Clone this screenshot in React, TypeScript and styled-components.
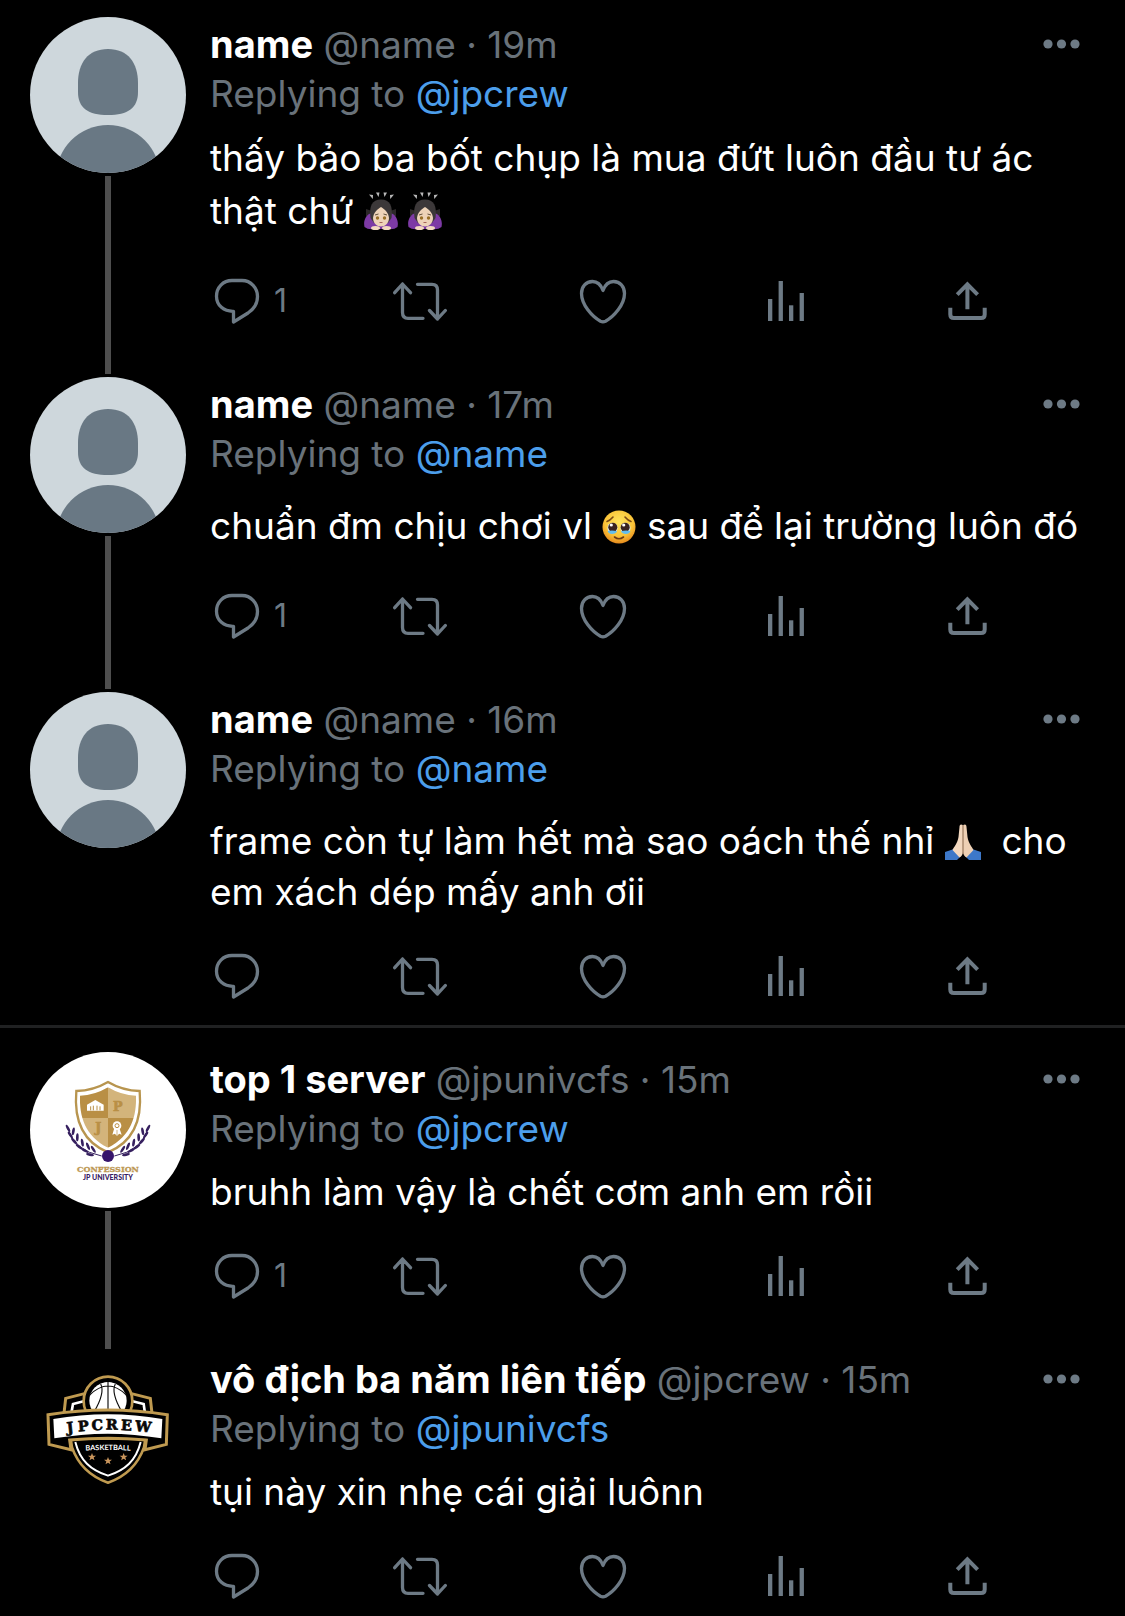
import React from "react";
import styled, { createGlobalStyle } from "styled-components";

const colors = {
  bg: "#000000",
  text: "#ffffff",
  muted: "#69727a",
  icon: "#6d7a85",
  link: "#4c9eeb",
  thread: "#4e4e4e",
  divider: "#202122",
};

const GlobalStyle = createGlobalStyle`
  *, *::before, *::after { box-sizing: border-box; }
  body {
    margin: 0;
    background: ${colors.bg};
    color: ${colors.text};
    font-family: Inter, Roboto, "Noto Sans", sans-serif;
  }
`;

const Timeline = styled.main`
  padding-top: 14px;
  overflow: hidden;
`;

const Thread = styled.section`
  & + & {
    border-top: 3px solid ${colors.divider};
    padding-top: 21px;
  }
`;

const TweetRow = styled.article`
  display: flex;
  padding-left: 30px;
`;

const AvatarColumn = styled.div`
  display: flex;
  flex-direction: column;
  align-items: center;
  flex: none;
  gap: 3px;
  padding-top: 3px;
  margin-right: 24px;
`;

const AvatarFrame = styled.div`
  width: 156px;
  height: 156px;
  border-radius: 50%;
  overflow: hidden;

  svg {
    display: block;
    width: 100%;
    height: 100%;
  }
`;

const ThreadLine = styled.div`
  flex: 1;
  width: 6px;
  background: ${colors.thread};
`;

const Content = styled.div<{ $last: boolean }>`
  flex: 1;
  min-width: 0;
  padding-top: 7px;
  padding-bottom: ${(p) => (p.$last ? 22 : 46)}px;
`;

const Header = styled.header`
  display: flex;
  align-items: center;
  justify-content: space-between;
  padding-right: 40px;
`;

const Byline = styled.div`
  font-size: 37px;
  line-height: 48px;
  color: ${colors.muted};
  white-space: nowrap;
`;

const DisplayName = styled.strong`
  font-size: 38px;
  line-height: 1;
  font-weight: 700;
  color: ${colors.text};
`;

const Replying = styled.p`
  margin: 0;
  font-size: 37px;
  line-height: 50px;
  color: ${colors.muted};
`;

const Mention = styled.a`
  color: ${colors.link};
  text-decoration: none;
`;

const Body = styled.p<{ $lead: number; $tail: number; $line: number }>`
  margin: ${(p) => p.$lead}px 40px ${(p) => p.$tail}px 0;
  font-size: 37px;
  line-height: ${(p) => p.$line}px;
`;

const IconButton = styled.button`
  display: flex;
  align-items: center;
  justify-self: start;
  gap: 10px;
  padding: 0;
  border: 0;
  background: none;
  color: ${colors.icon};
  font-family: inherit;
  font-size: 32px;
  line-height: 54px;
  cursor: pointer;
`;

const Actions = styled.div`
  display: grid;
  grid-template-columns: repeat(5, 1fr);
  height: 54px;
`;

const ActionSvg = styled.svg`
  display: block;
  width: 54px;
  height: 54px;
  fill: none;
  stroke: currentColor;
  stroke-width: 3.3;
  stroke-linecap: round;
  stroke-linejoin: round;
`;

const MoreSvg = styled.svg`
  display: block;
  width: 48px;
  height: 48px;
  fill: currentColor;
`;

const EmojiSvg = styled.svg<{ $wide?: boolean }>`
  width: ${(p) => (p.$wide ? 36 : 34)}px;
  height: 39px;
  vertical-align: -7px;
`;

function ReplyIcon() {
  return (
    <ActionSvg viewBox="0 0 54 54" aria-hidden="true">
      <path d="M22 6.5H32C41 6.5 47.5 14 47.5 22.5C47.5 30 43.5 35.3 38 39L23.5 48V37.3C14 37.6 6.5 31.5 6.5 22.2C6.5 13.5 13 6.5 22 6.5Z" />
    </ActionSvg>
  );
}

function RetweetIcon() {
  return (
    <ActionSvg viewBox="0 0 54 54" aria-hidden="true">
      <path d="M1.7 18.7L9.5 10L17.5 18.7M9.5 10V38.5C9.5 42 11.5 44.3 15 44.3H30" />
      <path d="M24.5 10.3H39C42.5 10.3 44.5 12.5 44.5 16V45M36.5 36.5L44.5 45L52.3 36.5" />
    </ActionSvg>
  );
}

function HeartIcon() {
  return (
    <ActionSvg viewBox="0 0 54 54" aria-hidden="true">
      <path d="M27 16.5C25 11 21.5 7.5 16.5 7.5C10 7.5 5.5 12.5 5.5 19.5C5.5 31 16.5 43 24.5 47.2Q27 48.4 29.5 47.2C37.5 43 48.5 31 48.5 19.5C48.5 12.5 44 7.5 37.5 7.5C32.5 7.5 29 11 27 16.5Z" />
    </ActionSvg>
  );
}

function StatsIcon() {
  return (
    <ActionSvg viewBox="0 0 54 54" aria-hidden="true">
      <g fill="currentColor" stroke="none">
        <rect x="9" y="25" width="4.3" height="22" />
        <rect x="19.6" y="7" width="4.3" height="40" />
        <rect x="30" y="31.3" width="4.3" height="15.7" />
        <rect x="40.6" y="19" width="4.3" height="28" />
      </g>
    </ActionSvg>
  );
}

function ShareIcon() {
  return (
    <ActionSvg viewBox="0 0 54 54" aria-hidden="true">
      <g strokeWidth="4" strokeLinecap="butt" strokeLinejoin="miter">
        <path d="M15.2 20.6L25.4 10.4L35.6 20.6M25.4 11V35.3" />
        <path d="M8.3 33.7V40.5C8.3 42.8 9.7 44.1 12 44.1H39C41.3 44.1 42.7 42.8 42.7 40.5V33.7" />
      </g>
    </ActionSvg>
  );
}

function BowingEmoji() {
  return (
    <EmojiSvg viewBox="1 0 34 39" role="img" aria-label="person bowing">
      <g fill="#b9b9b9">
        <path d="M6 2.5L10 3L9.8 7Z" />
        <path d="M13 0.5H16.5L15.5 5Z" />
        <path d="M20.5 0.5H24L21.5 5Z" />
        <path d="M27 3L31 2.5L27.2 7Z" />
      </g>
      <path d="M3 17L9 19V25L3 24ZM33 17L27 19V25L33 24Z" fill="#2c2829" />
      <path d="M1.5 35C0 29 3 22 9 21H27C33 22 36 29 34.5 35Q31 38 24 37H12Q5 38 1.5 35Z" fill="#7d3aa5" />
      <path d="M7.5 26C6 14 9 7.5 18 7.5S30 14 28.5 26L25 31H11Z" fill="#3c3839" />
      <path d="M18 15C15 17 10.5 20 10 26C10 31 14 34.5 18 34.5S26 31 26 26C25.5 20 21 17 18 15Z" fill="#eed3b8" />
      <path d="M12 23L15.5 22M24 23L20.5 22" stroke="#63513d" />
      <circle cx="14.5" cy="26" r="1.7" fill="#9a7027" />
      <circle cx="21.5" cy="26" r="1.7" fill="#9a7027" />
      <path d="M16.5 30.5H19.5" stroke="#a5655b" />
      <ellipse cx="12.5" cy="36" rx="4.5" ry="2" fill="#f3d9c1" />
      <ellipse cx="23.5" cy="36" rx="4.5" ry="2" fill="#f3d9c1" />
    </EmojiSvg>
  );
}

function TearyEmoji() {
  return (
    <EmojiSvg viewBox="1 0 34 39" role="img" aria-label="face holding back tears">
      <defs>
        <radialGradient id="face" cx="50%" cy="35%" r="65%">
          <stop offset="0" stopColor="#ffe45c" />
          <stop offset="0.65" stopColor="#fbc438" />
          <stop offset="1" stopColor="#e58a1d" />
        </radialGradient>
      </defs>
      <circle cx="18" cy="20" r="16.5" fill="url(#face)" />
      <path d="M6 14.5Q9 13.5 12 10M30 14.5Q27 13.5 24 10" fill="none" stroke="#7b4914" strokeWidth="1.6" strokeLinecap="round" />
      <ellipse cx="11.5" cy="21" rx="5" ry="5.3" fill="#d9eef8" />
      <ellipse cx="24.5" cy="21" rx="5" ry="5.3" fill="#d9eef8" />
      <circle cx="11.8" cy="20.3" r="4.5" fill="#3a2320" />
      <circle cx="24.2" cy="20.3" r="4.5" fill="#3a2320" />
      <circle cx="10.3" cy="18" r="1.6" fill="#fff" />
      <circle cx="22.7" cy="18" r="1.6" fill="#fff" />
      <path d="M6.5 24Q11.5 22.8 16 24.3Q15 27 11 27Q7.5 26.8 6.5 24ZM29.5 24Q24.5 22.8 20 24.3Q21 27 25 27Q28.5 26.8 29.5 24Z" fill="#64bdee" />
      <path d="M13.5 30Q18 33.5 22.5 30" fill="none" stroke="#6f3a12" strokeWidth="1.6" strokeLinecap="round" />
    </EmojiSvg>
  );
}

function PrayEmoji() {
  return (
    <EmojiSvg $wide viewBox="0 0 36 39" role="img" aria-label="folded hands">
      <path d="M0 30L9 27L16 34L12 38H0ZM36 30L27 27L20 34L24 38H36Z" fill="#3d78c9" />
      <path d="M17.8 3C15.5 1.5 14.5 3 14.5 5L13.5 15C12.5 21 9 25 7.5 28L14.5 35.5Q17.8 33.5 17.8 30Z" fill="#f3d8bf" />
      <path d="M18.2 3C20.5 1.5 21.5 3 21.5 5L22.5 15C23.5 21 27 25 28.5 28L21.5 35.5Q18.2 33.5 18.2 30Z" fill="#eed0b4" />
      <path d="M18 3V32" stroke="#b8906f" strokeWidth="1" />
    </EmojiSvg>
  );
}

function DefaultAvatar() {
  return (
    <svg viewBox="0 0 156 156" role="img" aria-label="Default avatar">
      <rect width="156" height="156" fill="#ced7dc" />
      <path d="M78 32C98 32 108 46 108 66V75C108 91 98 98 78 98S48 91 48 75V66C48 46 58 32 78 32Z" fill="#697884" />
      <circle cx="78" cy="160" r="52" fill="#697884" />
    </svg>
  );
}

const leaves = [
  [144, 265, 62],
  [151, 285, 55],
  [162, 303, 48],
  [177, 320, 38],
  [195, 332, 28],
  [160, 274, 100],
  [172, 292, 92],
  [187, 308, 80],
  [204, 319, 68],
  [220, 328, 58],
  [210, 344, 12],
];

function Laurel() {
  return (
    <g>
      <path d="M142 262Q162 332 245 348" fill="none" stroke="#36205f" strokeWidth="3" />
      {leaves.map(([x, y, angle]) => (
        <ellipse key={`${x}-${y}`} cx={x} cy={y} rx="12" ry="4" fill="#36205f" transform={`rotate(${angle} ${x} ${y})`} />
      ))}
    </g>
  );
}

function UniversityAvatar() {
  return (
    <svg viewBox="30 36 468 468" role="img" aria-label="Confession JP University crest">
      <defs>
        <clipPath id="crest">
          <path d="M264 142Q304 166 348 167C350 228 334 288 264 323C194 288 178 228 180 167Q224 166 264 142Z" />
        </clipPath>
      </defs>
      <rect x="30" y="36" width="468" height="468" fill="#fff" />
      <Laurel />
      <g transform="translate(528 0) scale(-1 1)">
        <Laurel />
      </g>
      <path
        d="M264 126Q308 152 359 153C366 232 344 304 264 337C184 304 162 232 169 153Q220 152 264 126Z"
        fill="#fff"
        stroke="#b8954f"
        strokeWidth="7"
      />
      <g clipPath="url(#crest)">
        <rect x="170" y="130" width="94" height="104" fill="#b98f45" />
        <rect x="264" y="130" width="94" height="104" fill="#d3b47b" />
        <rect x="170" y="234" width="94" height="104" fill="#d3b47b" />
        <rect x="264" y="234" width="94" height="104" fill="#b98f45" />
      </g>
      <path d="M201 194L226 180L251 194V212H201Z" fill="#fff" />
      <path d="M212 199V211M220 197V211M231 197V211M240 199V211" stroke="#b98f45" strokeWidth="3" />
      <g fontFamily="'DejaVu Serif', serif" fontWeight="700" textAnchor="middle" fill="#b98f45" stroke="#b98f45" strokeWidth="2">
        <text x="293" y="212" fontSize="38">P</text>
        <text x="235" y="277" fontSize="38">J</text>
      </g>
      <path d="M283 264L277 284L285 281L290 288V268ZM298 264L305 284L297 281L292 288V268Z" fill="#fff" />
      <circle cx="291" cy="257" r="13" fill="#fff" />
      <circle cx="291" cy="257" r="6" fill="none" stroke="#b98f45" strokeWidth="3" />
      <circle cx="264" cy="348" r="18" fill="#36146b" />
      <text
        x="264"
        y="396"
        fontSize="24"
        textAnchor="middle"
        fontFamily="'DejaVu Serif', serif"
        fontWeight="700"
        fill="#bd9855"
        stroke="#bd9855"
        strokeWidth="1"
      >
        CONFESSION
      </text>
      <text x="264" y="420" fontSize="21" textAnchor="middle" fontFamily="Lato, sans-serif" fontWeight="900" fill="#36205f">
        JP UNIVERSITY
      </text>
    </svg>
  );
}

const star = "M0 -12L3.2 -4L12 -3.7L5 1.7L7.5 10L0 5.2L-7.5 10L-5 1.7L-12 -3.7L-3.2 -4Z";

const wordmark = [
  { letter: "J", x: 122, y: 217, turn: -6 },
  { letter: "P", x: 161, y: 213, turn: -4 },
  { letter: "C", x: 202, y: 210, turn: -2 },
  { letter: "R", x: 245, y: 209, turn: 1 },
  { letter: "E", x: 289, y: 211, turn: 3 },
  { letter: "W", x: 338, y: 215, turn: 6 },
];

function CrewAvatar() {
  return (
    <svg viewBox="0 -24 468 468" role="img" aria-label="JPCREW Basketball badge">
      <defs>
        <clipPath id="ball">
          <circle cx="234" cy="128" r="63" />
        </clipPath>
        <path id="sport-curve" d="M144 273Q234 267 324 273" />
      </defs>
      <rect x="0" y="-24" width="468" height="468" fill="#000" />
      <g fill="#000" strokeLinejoin="miter">
        <path d="M102 160L107 115L175 98H293L361 115L366 160" stroke="#bf9a50" strokeWidth="9" />
        <path d="M124 160L129 132L175 120H293L341 132L345 160" stroke="#fff" strokeWidth="8" />
        <circle cx="234" cy="123" r="73" stroke="#bf9a50" strokeWidth="8" />
      </g>
      <g clipPath="url(#ball)">
        <circle cx="234" cy="122" r="56" fill="#fff" />
        <g fill="none" stroke="#111" strokeWidth="3.5">
          <path d="M234 66V155M178 106Q234 50 290 106M212 72Q226 98 192 156M256 72Q242 98 276 156" />
        </g>
      </g>
      <path d="M122 236L126 262C145 316 180 349 234 368C288 349 323 316 342 262L346 236Z" fill="#000" stroke="#bf9a50" strokeWidth="8" />
      <path d="M136 246C150 302 182 330 234 347C286 330 318 302 332 246" fill="none" stroke="#fff" strokeWidth="6" />
      <path
        d="M54 164Q234 136 412 164L409 253L345 269L349 240Q234 230 119 240L123 269L57 253Z"
        fill="#000"
        stroke="#bf9a50"
        strokeWidth="9"
      />
      <path d="M70 177Q234 148 397 177L394 235Q234 207 73 235Z" fill="#fff" />
      <g fontSize="43" textAnchor="middle" fontFamily="'DejaVu Serif', serif" fontWeight="700" fill="#080808" stroke="#080808" strokeWidth="2">
        {wordmark.map(({ letter, x, y, turn }) => (
          <text key={letter} x={x} y={y} transform={`rotate(${turn} ${x} ${y})`}>
            {letter}
          </text>
        ))}
      </g>
      <text fontSize="22" textAnchor="middle" fontFamily="Lato, sans-serif" fontWeight="700" fill="#fff">
        <textPath href="#sport-curve" startOffset="50%">BASKETBALL</textPath>
      </text>
      <g fill="#c9955c">
        <path d={star} transform="translate(186 291)" />
        <path d={star} transform="translate(234 303)" />
        <path d={star} transform="translate(281 291)" />
      </g>
    </svg>
  );
}

type TweetProps = {
  avatar: React.ReactNode;
  name: string;
  handle: string;
  age: string;
  replyTo: string;
  replies?: number;
  last?: boolean;
  lead?: number;
  tail?: number;
  line?: number;
  children: React.ReactNode;
};

function Tweet({
  avatar,
  name,
  handle,
  age,
  replyTo,
  replies,
  last = false,
  lead = 12,
  tail = 32,
  line = 51,
  children,
}: TweetProps) {
  return (
    <TweetRow>
      <AvatarColumn>
        <AvatarFrame>{avatar}</AvatarFrame>
        {!last && <ThreadLine />}
      </AvatarColumn>
      <Content $last={last}>
        <Header>
          <Byline>
            <DisplayName>{name}</DisplayName> {handle} · <time>{age}</time>
          </Byline>
          <IconButton type="button" aria-label="More">
            <MoreSvg viewBox="0 0 48 48" aria-hidden="true">
              <circle cx="11" cy="23" r="4.6" />
              <circle cx="24.5" cy="23" r="4.6" />
              <circle cx="38" cy="23" r="4.6" />
            </MoreSvg>
          </IconButton>
        </Header>
        <Replying>
          Replying to <Mention href={`#${replyTo}`}>{replyTo}</Mention>
        </Replying>
        <Body $lead={lead} $tail={tail} $line={line}>
          {children}
        </Body>
        <Actions>
          <IconButton type="button" aria-label="Reply">
            <ReplyIcon />
            {replies}
          </IconButton>
          <IconButton type="button" aria-label="Retweet">
            <RetweetIcon />
          </IconButton>
          <IconButton type="button" aria-label="Like">
            <HeartIcon />
          </IconButton>
          <IconButton type="button" aria-label="View activity">
            <StatsIcon />
          </IconButton>
          <IconButton type="button" aria-label="Share">
            <ShareIcon />
          </IconButton>
        </Actions>
      </Content>
    </TweetRow>
  );
}

export default function App() {
  return (
    <>
      <GlobalStyle />
      <Timeline>
        <Thread>
          <Tweet avatar={<DefaultAvatar />} name="name" handle="@name" age="19m" replyTo="@jpcrew" replies={1} tail={37} line={53}>
            thấy bảo ba bốt chụp là mua đứt luôn đầu tư ác thật chứ <BowingEmoji /> <BowingEmoji />
          </Tweet>
          <Tweet avatar={<DefaultAvatar />} name="name" handle="@name" age="17m" replyTo="@name" replies={1} lead={21} tail={38}>
            chuẩn đm chịu chơi vl <TearyEmoji /> sau để lại trường luôn đó
          </Tweet>
          <Tweet avatar={<DefaultAvatar />} name="name" handle="@name" age="16m" replyTo="@name" lead={21} last>
            frame còn tự làm hết mà sao oách thế nhỉ <PrayEmoji />
            {"\u00a0 "}cho em xách dép mấy anh ơii
          </Tweet>
        </Thread>
        <Thread>
          <Tweet avatar={<UniversityAvatar />} name="top 1 server" handle="@jpunivcfs" age="15m" replyTo="@jpcrew" replies={1}>
            bruhh làm vậy là chết cơm anh em rồii
          </Tweet>
          <Tweet avatar={<CrewAvatar />} name="vô địch ba năm liên tiếp" handle="@jpcrew" age="15m" replyTo="@jpunivcfs" last>
            tụi này xin nhẹ cái giải luônn
          </Tweet>
        </Thread>
      </Timeline>
    </>
  );
}
